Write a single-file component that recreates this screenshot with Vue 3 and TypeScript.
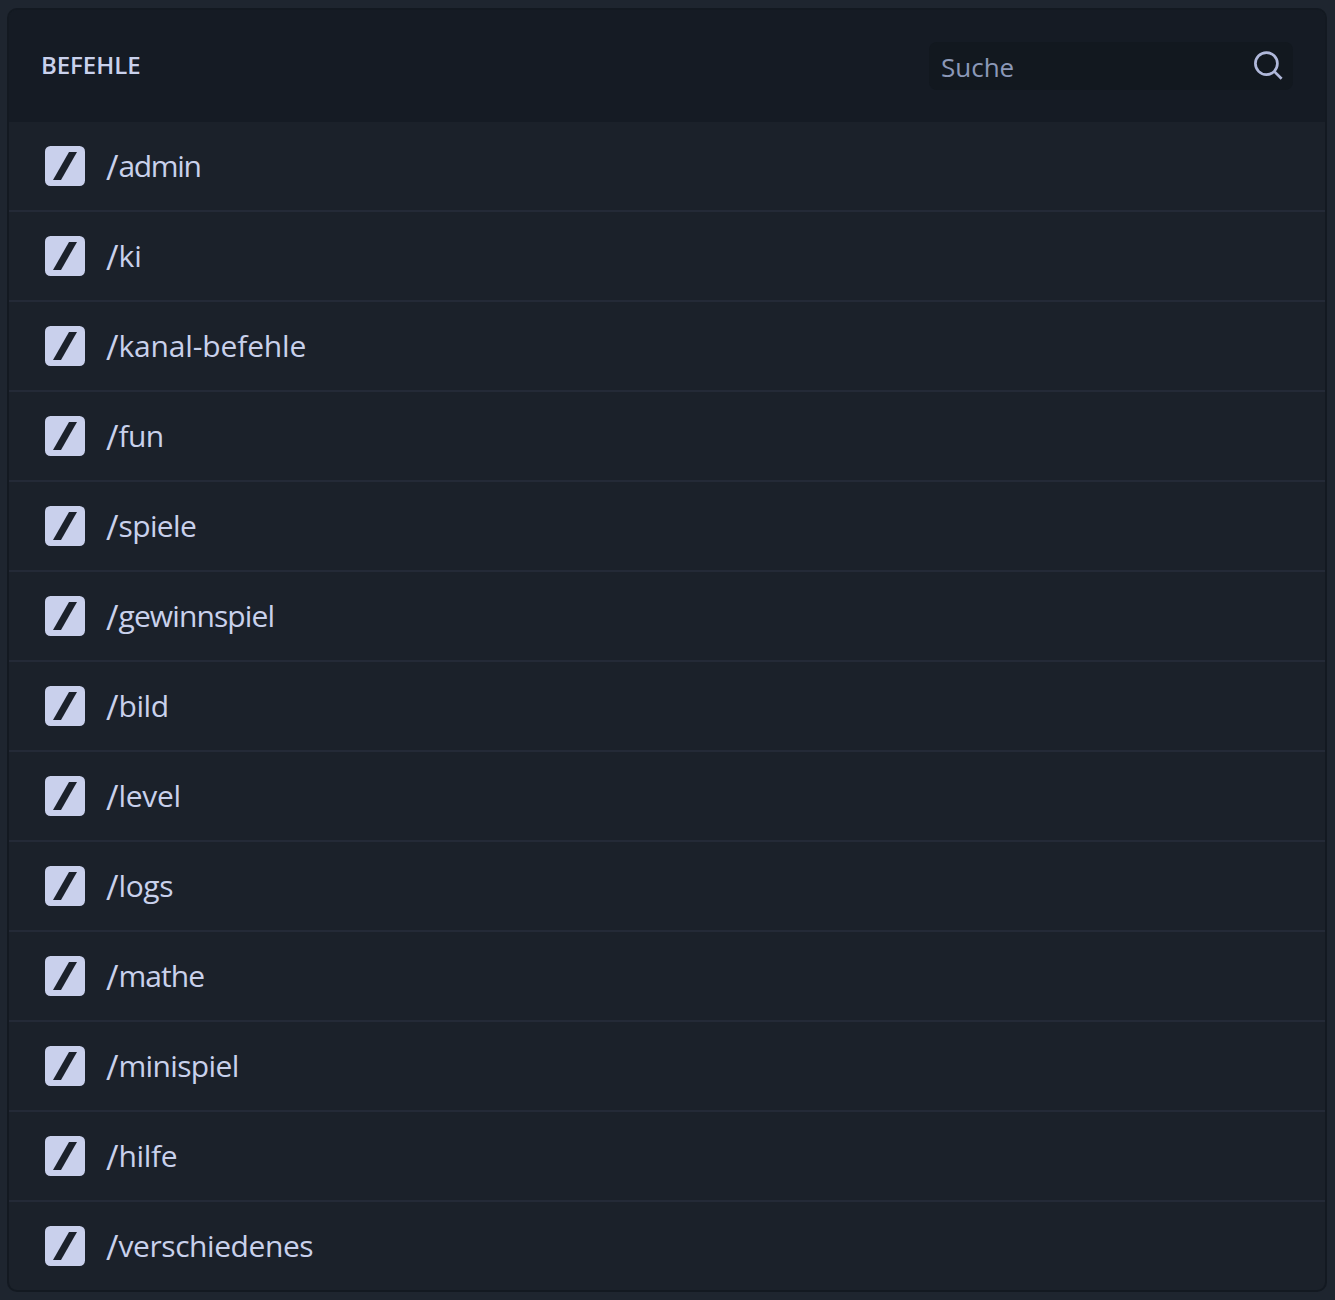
<script setup lang="ts">
interface Command {
  name: string
  tracking: number
}

const commands: Command[] = [
  { name: 'admin', tracking: -1.35 },
  { name: 'ki', tracking: 0 },
  { name: 'kanal-befehle', tracking: -0.15 },
  { name: 'fun', tracking: -0.6 },
  { name: 'spiele', tracking: -0.62 },
  { name: 'gewinnspiel', tracking: -0.88 },
  { name: 'bild', tracking: -0.4 },
  { name: 'level', tracking: -0.3 },
  { name: 'logs', tracking: -0.4 },
  { name: 'mathe', tracking: -0.95 },
  { name: 'minispiel', tracking: -0.65 },
  { name: 'hilfe', tracking: -0.35 },
  { name: 'verschiedenes', tracking: -0.43 },
]
</script>

<template>
  <main class="page">
    <section class="panel">
      <header class="head">
        <h2 class="title">BEFEHLE</h2>
        <label class="search">
          <input class="field" type="text" placeholder="Suche" />
          <svg class="glass" viewBox="0 0 32 32" fill="none" stroke="#b0b8da" stroke-width="2.7">
            <circle cx="14.4" cy="14.6" r="11" />
            <path d="M22.2 22.4L29.6 29.8" />
          </svg>
        </label>
      </header>
      <ul class="list">
        <li v-for="command in commands" :key="command.name" class="row">
          <svg class="slash" viewBox="0 0 40 40">
            <rect width="40" height="40" rx="5.5" fill="#c9d0ec" />
            <path d="M24 6H32L16 34H8Z" fill="#1b212b" />
          </svg>
          <span class="name"><span class="prefix">/</span><span :style="{ letterSpacing: command.tracking + 'px' }">{{ command.name }}</span></span>
        </li>
      </ul>
    </section>
  </main>
</template>

<style>
body { background: #1e252f; }
</style>

<style scoped>
.page { box-sizing: border-box; height: 1300px; padding: 8px 8px 8px 7px; font-family: "Open Sans", "Noto Sans", sans-serif; }
.panel { box-sizing: border-box; height: 1284px; border: 2px solid #131921; border-radius: 10px; overflow: hidden; background: #1b212a; }
.head { box-sizing: border-box; height: 112px; padding: 0 32px; display: flex; align-items: center; justify-content: space-between; background: #151b24; }
.title { margin: 0; padding-bottom: 2px; font-size: 24px; font-weight: 650; letter-spacing: -0.05px; line-height: 30px; color: #c9d1ec; }
.search { box-sizing: border-box; width: 364px; height: 48px; padding: 0 9px 0 12px; display: flex; align-items: center; border-radius: 8px; background: #12181f; }
.field { flex: 1; min-width: 0; padding: 1px 0 0; border: 0; outline: 0; background: none; font: 26px "Open Sans", "Noto Sans", sans-serif; color: #c9d1ec; }
.field::placeholder { color: #8c98b8; opacity: 1; }
.glass { width: 32px; height: 32px; margin-bottom: 2px; }
.list { margin: 0; padding: 0; list-style: none; }
.row { box-sizing: border-box; height: 90px; padding: 0 36px; display: flex; align-items: center; gap: 21px; border-bottom: 2px solid #242a37; }
.row:last-child { border-bottom-color: transparent; }
.slash { width: 40px; height: 40px; }
.name { height: 40px; font-size: 30px; line-height: 40px; color: #c9d1ec; }
.prefix { position: relative; top: 3px; font-size: 34px; line-height: 1; }
</style>
